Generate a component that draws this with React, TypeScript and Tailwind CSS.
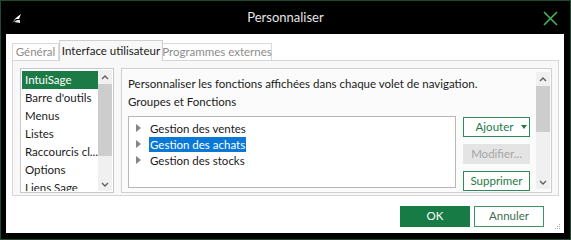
import React from 'react';

const sideItems = ['IntuiSage', "Barre d'outils", 'Menus', 'Listes', 'Raccourcis cl...', 'Options', 'Liens Sage'];
const groups = ['Gestion des ventes', 'Gestion des achats', 'Gestion des stocks'];

const Chevron: React.FC<{ up?: boolean }> = ({ up }) => (
  <svg width="8" height="5" viewBox="0 0 8 5" className="block">
    <path d={up ? 'M1 4 L4 1 L7 4' : 'M1 1 L4 4 L7 1'} fill="none" stroke="#606060" strokeWidth="1.4" />
  </svg>
);

const ScrollBar: React.FC<{ thumbTop: number; thumbHeight: number }> = ({ thumbTop, thumbHeight }) => (
  <div className="flex w-[14px] shrink-0 flex-col items-stretch bg-[#f0f0f0]">
    <div className="flex h-[14px] items-center justify-center">
      <Chevron up />
    </div>
    <div className="relative flex-1">
      <div className="absolute inset-x-0 bg-[#cdcdcd]" style={{ top: thumbTop, height: thumbHeight }} />
    </div>
    <div className="flex h-[14px] items-center justify-center">
      <Chevron />
    </div>
  </div>
);

const App: React.FC = () => {
  return (
    <div className="flex h-[240px] w-[571px] flex-col overflow-hidden whitespace-nowrap border border-[#1d4a31] bg-black font-['Lato',sans-serif] text-[11.5px]">
      {/* Title bar */}
      <div className="relative flex h-[33px] shrink-0 items-center justify-center">
        <svg width="9" height="9" viewBox="0 0 9 9" className="absolute left-[11px] top-[13px]">
          <path d="M0 9 L4 5 L7 5 L9 0 L5 3 L3 5 Z" fill="#ffffff" />
          <path d="M2 8 L5 6 L8 6 L8 9 Z" fill="#d8e8dd" />
        </svg>
        <span className="text-[13px] text-[#e6e6e6]">Personnaliser</span>
        <svg width="15" height="15" viewBox="0 0 15 15" className="absolute right-[12px] top-[10px]">
          <path d="M1 1 L14 14 M14 1 L1 14" stroke="#45b35a" strokeWidth="1.6" />
        </svg>
      </div>

      {/* Client area */}
      <div className="ml-[5px] mr-[6px] mb-[6px] flex flex-1 flex-col bg-white">
        {/* Tabs */}
        <div className="flex h-[26px] items-end pl-[6px] pt-[6px]">
          <div className="relative z-0 flex h-[17px] w-[47px] items-center justify-center border border-b-0 border-[#dadada] bg-white text-[#8c8c8c]">
            Général
          </div>
          <div className="relative z-10 -mb-px flex h-[21px] w-[104px] items-center justify-center border border-b-0 border-[#cfcfcf] bg-[#f8f8f8] text-[#1a1a1a]">
            Interface utilisateur
          </div>
          <div className="flex h-[17px] w-[109px] items-center justify-center border border-b-0 border-l-0 border-[#dadada] bg-white text-[#8c8c8c]">
            Programmes externes
          </div>
        </div>

        {/* Tab panel */}
        <div className="ml-[6px] mr-[5px] flex h-[136px] gap-[7px] border border-[#d6d6d6] bg-[#f8f8f8] pl-[7px] pt-[7px]">
          {/* Left list */}
          <div className="flex h-[125px] w-[94px] shrink-0 border border-[#c8c8c8] bg-white p-px">
            <div className="flex-1 overflow-hidden pt-px">
              {sideItems.map((item, i) => (
                <div
                  key={item}
                  className={`flex h-[18px] items-center pl-[3px] ${i === 0 ? 'bg-[#1b7a45] text-white' : 'text-[#1a1a1a]'}`}
                >
                  {item}
                </div>
              ))}
            </div>
            <ScrollBar thumbTop={0} thumbHeight={72} />
          </div>

          {/* Right panel */}
          <div className="flex h-[125px] w-[431px] border border-[#cfcfcf] bg-[#fbfbfb]">
            <div className="flex-1 overflow-hidden pl-[6px] pt-[6px]">
              <div className="flex h-[18px] items-center text-[#1a1a1a]">
                Personnaliser les fonctions affichées dans chaque volet de navigation.
              </div>
              <div className="flex h-[18px] items-center text-[#1a1a1a]">Groupes et Fonctions</div>
              <div className="mt-[5px] flex gap-[7px]">
                <div className="h-[72px] w-[328px] border border-[#b8b8b8] bg-white pt-[3px]">
                  {groups.map((g, i) => (
                    <div key={g} className="flex h-[16px] items-center">
                      <svg width="5" height="8" viewBox="0 0 5 8" className="ml-[7px] mr-[8px]">
                        <path d="M0 0 L5 4 L0 8 Z" fill="#858585" />
                      </svg>
                      <span className={`px-px leading-[15px] ${i === 1 ? 'bg-[#0a78d7] text-white' : 'text-[#1a1a1a]'}`}>{g}</span>
                    </div>
                  ))}
                </div>
                <div className="flex w-[67px] flex-col gap-[7px] pt-px">
                  <div className="flex h-[20px] items-center justify-center gap-[8px] border border-[#2e8a58] bg-white pl-[10px] text-[#1d7a47]">
                    Ajouter
                    <svg width="6" height="4" viewBox="0 0 6 4">
                      <path d="M0 0 L6 0 L3 4 Z" fill="#1d7a47" />
                    </svg>
                  </div>
                  <div className="flex h-[20px] items-center justify-center bg-[#e4e4e4] text-[#a5a5a5]">Modifier...</div>
                  <div className="flex h-[20px] items-center justify-center border border-[#2e8a58] bg-white text-[#1d7a47]">
                    Supprimer
                  </div>
                </div>
              </div>
            </div>
            <div className="flex py-[3px] pr-px">
              <ScrollBar thumbTop={0} thumbHeight={46} />
            </div>
          </div>
        </div>

        {/* Footer */}
        <div className="relative flex flex-1 items-center justify-end gap-[4px] pr-[20px] pt-[3px]">
          <div className="flex h-[21px] w-[70px] items-center justify-center bg-[#177b45] text-white">OK</div>
          <div className="flex h-[21px] w-[70px] items-center justify-center border border-[#3a9463] bg-white text-[#3f6b52]">
            Annuler
          </div>
          <svg width="6" height="6" viewBox="0 0 6 6" className="absolute bottom-[3px] right-[3px]">
            <rect x="4" y="0" width="1" height="1" fill="#b0b0b0" />
            <rect x="2" y="2" width="1" height="1" fill="#b0b0b0" />
            <rect x="4" y="2" width="1" height="1" fill="#b0b0b0" />
            <rect x="0" y="4" width="1" height="1" fill="#b0b0b0" />
            <rect x="2" y="4" width="1" height="1" fill="#b0b0b0" />
            <rect x="4" y="4" width="1" height="1" fill="#b0b0b0" />
          </svg>
        </div>
      </div>
    </div>
  );
};

export default App;
